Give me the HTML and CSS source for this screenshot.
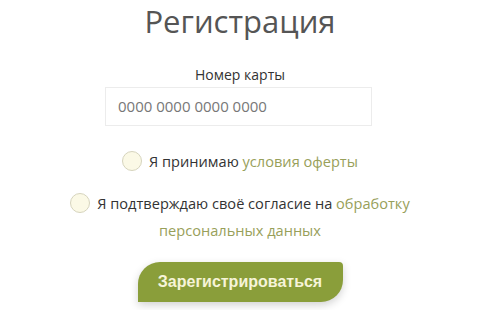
FILE: index.html
```html
<!DOCTYPE html>
<html lang="ru">
<head>
<meta charset="utf-8">
<link rel="stylesheet" href="styles.css">
</head>
<body>
<div class="page">
  <h1 class="title">Регистрация</h1>
  <label class="label">Номер карты</label>
  <div class="input">0000 0000 0000 0000</div>
  <p class="check row1"><span class="radio"></span>Я принимаю <a class="link">условия оферты</a></p>
  <p class="check row2"><span class="radio"></span>Я подтверждаю своё согласие на <a class="link">обработку</a><br><a class="link">персональных данных</a></p>
  <div class="btn">Зарегистрироваться</div>
</div>
</body>
</html>
```
FILE: styles.css
```css
html, body {
  margin: 0;
  padding: 0;
  background: #fff;
}
.page {
  width: 480px;
  height: 310px;
  display: flex;
  flex-direction: column;
  align-items: center;
  font-family: "Open Sans", "Noto Sans", sans-serif;
  color: #333;
  overflow: hidden;
}
.title {
  margin: 0;
  padding-top: 2px;
  font-size: 31px;
  line-height: 38px;
  font-weight: 400;
  color: #555;
}
.label {
  margin-top: 25px;
  font-size: 14px;
  line-height: 20px;
  color: #333;
}
.input {
  margin-top: 2px;
  width: 267px;
  height: 39px;
  box-sizing: border-box;
  border: 1px solid #ececec;
  padding-left: 12px;
  font-size: 15px;
  line-height: 37px;
  color: #777;
  margin-left: -3px;
}
.check {
  margin: 0;
  text-align: center;
  font-size: 14.6px;
  color: #333;
}
.row1 {
  margin-top: 23px;
  line-height: 24px;
}
.row2 {
  margin-top: 17px;
  width: 370px;
  line-height: 27px;
}
.radio {
  display: inline-block;
  width: 20px;
  height: 20px;
  box-sizing: border-box;
  border-radius: 50%;
  border: 1px solid #d6d4bd;
  background: #fbf9e6;
  vertical-align: middle;
  margin-right: 7px;
  position: relative;
  top: -2px;
}
.link {
  color: #98a05a;
}
.btn {
  margin-top: 18px;
  width: 205px;
  height: 40px;
  background: #8a9e3a;
  border-radius: 22px 4px 22px 0;
  box-shadow: 0 3px 8px rgba(0, 0, 0, 0.18);
  color: #f6f4d8;
  font-family: "Liberation Sans", Arial, sans-serif;
  font-weight: 700;
  font-size: 16px;
  line-height: 40px;
  text-align: center;
}
```
